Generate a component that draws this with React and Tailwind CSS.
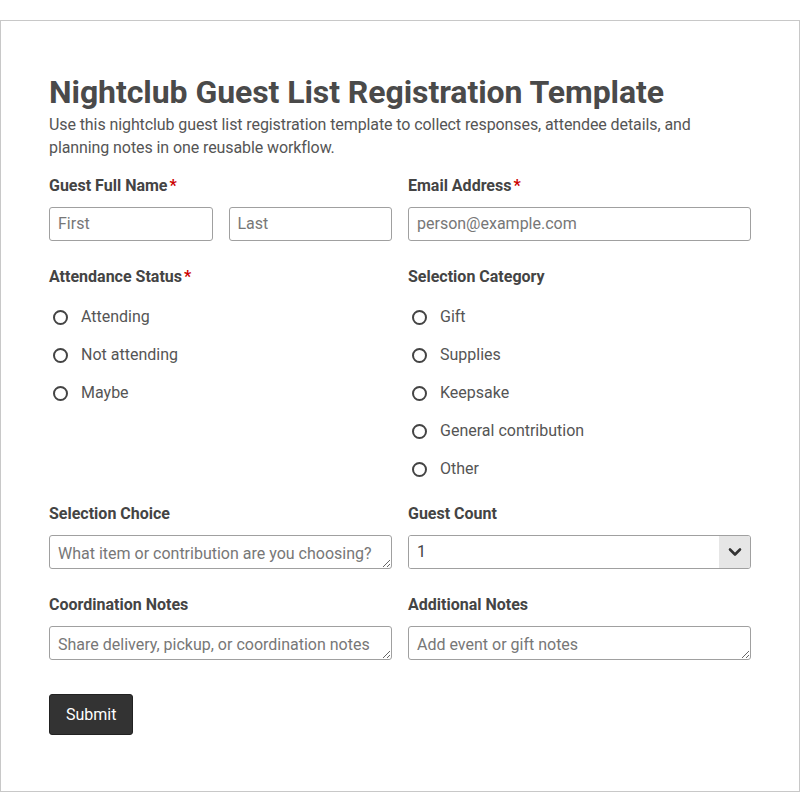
import React from "react";

const font = { fontFamily: "Roboto, 'Liberation Sans', sans-serif" };

function Label({ children, required }) {
  return (
    <div className="h-6 pt-px text-base font-bold leading-6 text-[#444]">
      {children}
      {required && <span className="ml-[2px] text-[#c00]">*</span>}
    </div>
  );
}

function Radio({ name, label }) {
  return (
    <label className="flex h-[38px] items-center text-base text-[#555]">
      <input
        type="radio"
        name={name}
        className="ml-1 mr-[13px] h-[15px] w-[15px] appearance-none rounded-full border-2 border-[#444] bg-white"
      />
      {label}
    </label>
  );
}

const baseCls =
  "h-[34px] w-full rounded-[3px] border border-[#a0a0a0] bg-white px-2 text-base text-[#444] placeholder:text-[#777] outline-none";

const inputCls = baseCls + " pb-[2px]";

const areaCls = baseCls + " mt-[10px] block resize-y pt-[7px] pb-[3px] leading-[22px]";

export default function App() {
  const attendance = ["Attending", "Not attending", "Maybe"];
  const categories = ["Gift", "Supplies", "Keepsake", "General contribution", "Other"];

  return (
    <div className="bg-white pt-5" style={font}>
      <form className="border border-[#c8c8c8] px-12 pt-12 pb-[56px]">
        {/* HEADER */}
        <h1 className="mt-[3px] text-[32px] font-bold leading-10 tracking-[-0.07px] text-[#4a4a4a]">
          Nightclub Guest List Registration Template
        </h1>
        <p className="mt-px text-base leading-[23px] tracking-[-0.09px] text-[#555]">
          Use this nightclub guest list registration template to collect responses, attendee details, and
          planning notes in one reusable workflow.
        </p>

        {/* NAME + EMAIL */}
        <div className="mt-[14px] grid grid-cols-2 gap-x-4">
          <div>
            <Label required>Guest Full Name</Label>
            <div className="mt-[10px] grid grid-cols-2 gap-4">
              <input className={inputCls} placeholder="First" />
              <input className={inputCls} placeholder="Last" />
            </div>
          </div>
          <div>
            <Label required>Email Address</Label>
            <input className={inputCls + " mt-[10px]"} placeholder="person@example.com" />
          </div>
        </div>

        {/* RADIOS */}
        <div className="mt-[23px] grid grid-cols-2 gap-x-4">
          <div>
            <Label required>Attendance Status</Label>
            <div className="mt-[10px]">
              {attendance.map((a) => (
                <Radio key={a} name="attendance" label={a} />
              ))}
            </div>
          </div>
          <div>
            <Label>Selection Category</Label>
            <div className="mt-[10px]">
              {categories.map((c) => (
                <Radio key={c} name="category" label={c} />
              ))}
            </div>
          </div>
        </div>

        {/* CHOICE + COUNT */}
        <div className="mt-[13px] grid grid-cols-2 gap-x-4">
          <div>
            <Label>Selection Choice</Label>
            <textarea rows={1} className={areaCls} placeholder="What item or contribution are you choosing?" />
          </div>
          <div>
            <Label>Guest Count</Label>
            <div className="mt-[10px] flex h-[34px] overflow-hidden rounded-[3px] border border-[#a0a0a0] bg-white">
              <select className="flex-1 appearance-none bg-white pl-2 text-base text-[#444] outline-none">
                <option>1</option>
                <option>2</option>
                <option>3</option>
                <option>4</option>
                <option>5</option>
              </select>
              <span className="flex w-[31px] items-center justify-center bg-[#e6e6e6]">
                <svg width="14" height="10" viewBox="0 0 14 10" fill="none">
                  <path d="M2 2.5l5 5 5-5" stroke="#333" strokeWidth="2.6" strokeLinecap="round" strokeLinejoin="round" />
                </svg>
              </span>
            </div>
          </div>
        </div>

        {/* NOTES */}
        <div className="mt-[23px] grid grid-cols-2 gap-x-4">
          <div>
            <Label>Coordination Notes</Label>
            <textarea rows={1} className={areaCls} placeholder="Share delivery, pickup, or coordination notes" />
          </div>
          <div>
            <Label>Additional Notes</Label>
            <textarea rows={1} className={areaCls} placeholder="Add event or gift notes" />
          </div>
        </div>

        {/* SUBMIT */}
        <button
          type="button"
          className="mt-[34px] h-[41px] rounded-[3px] border border-[#222] bg-[#333] px-4 text-base text-white"
        >
          Submit
        </button>
      </form>
    </div>
  );
}
